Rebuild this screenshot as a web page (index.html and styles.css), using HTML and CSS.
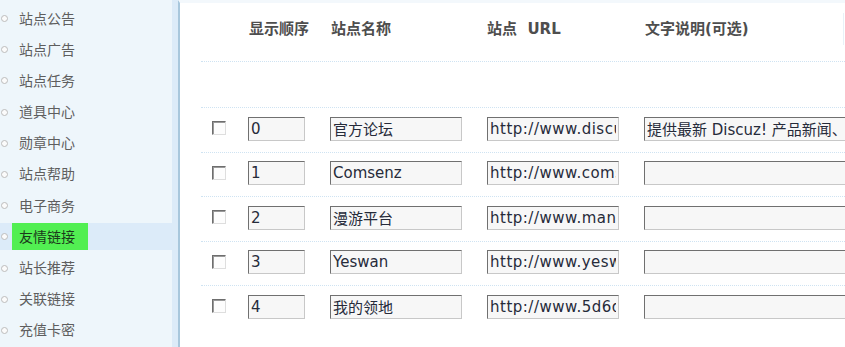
FILE: index.html
```html
<!DOCTYPE html>
<html lang="zh-CN">
<head>
<meta charset="utf-8">
<title>友情链接</title>
<link rel="stylesheet" href="styles.css">
</head>
<body>
<aside class="sidebar">
  <ul class="menu">
    <li class="item"><span class="bullet"></span><span class="label">站点公告</span></li>
    <li class="item"><span class="bullet"></span><span class="label">站点广告</span></li>
    <li class="item"><span class="bullet"></span><span class="label">站点任务</span></li>
    <li class="item"><span class="bullet"></span><span class="label">道具中心</span></li>
    <li class="item"><span class="bullet"></span><span class="label">勋章中心</span></li>
    <li class="item"><span class="bullet"></span><span class="label">站点帮助</span></li>
    <li class="item"><span class="bullet"></span><span class="label">电子商务</span></li>
    <li class="item active"><span class="bullet"></span><span class="label">友情链接</span></li>
    <li class="item"><span class="bullet"></span><span class="label">站长推荐</span></li>
    <li class="item"><span class="bullet"></span><span class="label">关联链接</span></li>
    <li class="item"><span class="bullet"></span><span class="label">充值卡密</span></li>
  </ul>
</aside>
<main class="content">
  <div class="table">
    <div class="row head">
      <div class="cell"></div>
      <div class="cell th">显示顺序</div>
      <div class="cell th">站点名称</div>
      <div class="cell th th-url">站点&nbsp;&nbsp;URL</div>
      <div class="cell th">文字说明(可选)</div>
      <div class="cell th-edge"></div>
    </div>
    <div class="row empty"></div>
    <div class="row data">
      <div class="cell"><span class="check"></span></div>
      <div class="cell"><input class="field f-order" type="text" value="0"></div>
      <div class="cell"><input class="field f-name" type="text" value="官方论坛"></div>
      <div class="cell"><input class="field f-url" type="text" value="http://www.discuz.net"></div>
      <div class="cell"><input class="field f-desc" type="text" value="提供最新 Discuz! 产品新闻、软件下载与技术交流"></div>
    </div>
    <div class="row data">
      <div class="cell"><span class="check"></span></div>
      <div class="cell"><input class="field f-order" type="text" value="1"></div>
      <div class="cell"><input class="field f-name" type="text" value="Comsenz"></div>
      <div class="cell"><input class="field f-url" type="text" value="http://www.comsenz.com"></div>
      <div class="cell"><input class="field f-desc" type="text" value=""></div>
    </div>
    <div class="row data">
      <div class="cell"><span class="check"></span></div>
      <div class="cell"><input class="field f-order" type="text" value="2"></div>
      <div class="cell"><input class="field f-name" type="text" value="漫游平台"></div>
      <div class="cell"><input class="field f-url" type="text" value="http://www.manyou.com"></div>
      <div class="cell"><input class="field f-desc" type="text" value=""></div>
    </div>
    <div class="row data">
      <div class="cell"><span class="check"></span></div>
      <div class="cell"><input class="field f-order" type="text" value="3"></div>
      <div class="cell"><input class="field f-name" type="text" value="Yeswan"></div>
      <div class="cell"><input class="field f-url" type="text" value="http://www.yeswan.com"></div>
      <div class="cell"><input class="field f-desc" type="text" value=""></div>
    </div>
    <div class="row data last">
      <div class="cell"><span class="check"></span></div>
      <div class="cell"><input class="field f-order" type="text" value="4"></div>
      <div class="cell"><input class="field f-name" type="text" value="我的领地"></div>
      <div class="cell"><input class="field f-url" type="text" value="http://www.5d6d.com"></div>
      <div class="cell"><input class="field f-desc" type="text" value=""></div>
    </div>
  </div>
</main>
</body>
</html>
```
FILE: styles.css
```css
html, body {
  margin: 0;
  padding: 0;
  height: 100%;
}
body {
  display: flex;
  overflow: hidden;
  background: #ffffff;
  font-family: "DejaVu Sans", "Noto Sans CJK SC", sans-serif;
  color: #555555;
}

/* ---------- sidebar ---------- */
.sidebar {
  width: 172px;
  flex: 0 0 172px;
  background: #eef6fb;
  border-right: 6px solid #dcebf8;
  height: 100%;
}
.menu {
  list-style: none;
  margin: 0;
  padding: 4.5px 0 0 0;
  display: flex;
  flex-direction: column;
  gap: 4.2px;
}
.item {
  display: flex;
  align-items: center;
  height: 27px;
  padding-left: 1px;
  font-family: "Noto Sans CJK SC", sans-serif;
  font-size: 14px;
  color: #5e5e5e;
}
.bullet {
  width: 5px;
  height: 5px;
  border: 1px solid #bcbcbc;
  border-radius: 50%;
  background: #fbfbfb;
  margin-right: 4px;
  margin-top: 1px;
}
.label {
  display: block;
  height: 27px;
  line-height: 27px;
  padding: 0 13px 0 7px;
}
.item.active {
  background: #dcebf9;
}
.item.active .label {
  background: #52ef52;
  color: #1c3a1c;
}

/* ---------- content ---------- */
.content {
  flex: 1 1 auto;
  border-left: 2px solid #a8c7dc;
  border-top: 3px solid #f3f8fc;
  padding-left: 21px;
  overflow: hidden;
  min-width: 0;
}
.table {
  display: flex;
  flex-direction: column;
}
.row {
  display: grid;
  grid-template-columns: 47px 82px 157px 157px 199px 1fr;
  box-sizing: border-box;
  border-bottom: 1px dotted #cfe3f2;
}
.row.head {
  height: 59px;
  padding-top: 16px;
  align-items: start;
}
.th {
  font-weight: bold;
  font-size: 15px;
  line-height: 20px;
  color: #4e4e4e;
  white-space: nowrap;
  padding-left: 1px;
}
.th-url {
  padding-left: 0;
}
.th-edge {
  height: 32px;
  margin-top: -6px;
  border-left: 1px solid #e8f1f8;
}
.row.empty {
  height: 46px;
}
.row.data {
  height: 44.5px;
  padding-top: 8.5px;
  align-items: start;
}
.row.last {
  border-bottom: none;
}
.cell {
  min-width: 0;
}

.check {
  display: block;
  box-sizing: border-box;
  width: 14px;
  height: 14px;
  margin: 4.5px 0 0 11px;
  border: 1px solid;
  border-color: #6e6e6e #dedede #dedede #6e6e6e;
  box-shadow: inset 1px 1px 0 #9a9a9a;
  background: #fdfdfd;
}

.field {
  display: block;
  box-sizing: border-box;
  height: 24px;
  margin: 0;
  padding: 0 2px;
  border: 1px solid;
  border-color: #707070 #c8c8c8 #c8c8c8 #707070;
  background: #f7f7f7;
  font-family: "DejaVu Sans", "Noto Sans CJK SC", sans-serif;
  font-size: 15px;
  color: #262b3a;
  outline: none;
}
.f-order { width: 57px; }
.f-name { width: 132px; }
.f-url { width: 132px; letter-spacing: 0.5px; }
.f-desc { width: 280px; }
```
